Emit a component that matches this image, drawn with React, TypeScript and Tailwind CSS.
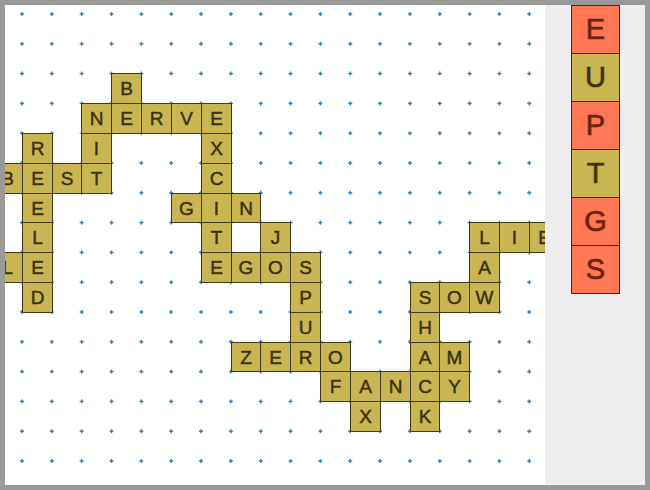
import React from "react";

const CELL_X = 29.84;
const CELL_Y = 29.8;
const X0 = 21.7;
const Y0 = 13.8;
const OFF = 5;

const px = (c: number) => Math.round(X0 + CELL_X * c) - OFF;
const py = (r: number) => Math.round(Y0 + CELL_Y * r) - OFF;

type T = [string, number, number];

const tiles: T[] = [
  ["B", 3, 2],
  ["N", 2, 3], ["E", 3, 3], ["R", 4, 3], ["V", 5, 3], ["E", 6, 3],
  ["R", 0, 4], ["I", 2, 4], ["X", 6, 4],
  ["B", -1, 5], ["E", 0, 5], ["S", 1, 5], ["T", 2, 5], ["C", 6, 5],
  ["E", 0, 6], ["G", 5, 6], ["I", 6, 6], ["N", 7, 6],
  ["L", 0, 7], ["T", 6, 7], ["J", 8, 7], ["L", 15, 7], ["I", 16, 7], ["E", 17, 7],
  ["L", -1, 8], ["E", 0, 8], ["E", 6, 8], ["G", 7, 8], ["O", 8, 8], ["S", 9, 8], ["A", 15, 8],
  ["D", 0, 9], ["P", 9, 9], ["S", 13, 9], ["O", 14, 9], ["W", 15, 9],
  ["U", 9, 10], ["H", 13, 10],
  ["Z", 7, 11], ["E", 8, 11], ["R", 9, 11], ["O", 10, 11], ["A", 13, 11], ["M", 14, 11],
  ["F", 10, 12], ["A", 11, 12], ["N", 12, 12], ["C", 13, 12], ["Y", 14, 12],
  ["X", 11, 13], ["K", 13, 13],
];

const rack: { l: string; salmon: boolean }[] = [
  { l: "E", salmon: true },
  { l: "U", salmon: false },
  { l: "P", salmon: true },
  { l: "T", salmon: false },
  { l: "G", salmon: true },
  { l: "S", salmon: true },
];

function Dots() {
  const items: React.ReactNode[] = [];
  for (let c = 0; c <= 17; c++) {
    for (let r = 0; r <= 15; r++) {
      const x = X0 + CELL_X * c - OFF + 0.3;
      const y = Y0 + CELL_Y * r - OFF + 0.2;
      items.push(
        <g key={`${c}-${r}`}>
          <line x1={x - 2} y1={y} x2={x + 2} y2={y} stroke="#2f82b4" strokeWidth={1.4} />
          <line x1={x} y1={y - 2} x2={x} y2={y + 2} stroke="#2f82b4" strokeWidth={1.4} />
        </g>
      );
    }
  }
  return (
    <svg className="absolute left-0 top-0" width={540} height={480}>
      {items}
    </svg>
  );
}

export default function App() {
  return (
    <div
      className="w-[650px] h-[490px] bg-[#999999] p-[5px] flex"
      style={{ fontFamily: '"Liberation Sans", Arial, sans-serif' }}
    >
      <div className="relative w-[540px] h-[480px] bg-white overflow-hidden">
        <Dots />
        {tiles.map(([l, c, r], i) => {
          const left = px(c);
          const top = py(r);
          const w = px(c + 1) - left + 1;
          const h = py(r + 1) - top + 1;
          return (
            <div
              key={i}
              className="absolute flex items-center justify-center bg-[#c9b552] border border-[#3e3917] text-[#3a3210] text-[19px] leading-none [-webkit-text-stroke:0.45px_#3a3210]"
              style={{ left, top, width: w, height: h }}
            >
              {l}
            </div>
          );
        })}
      </div>
      <div className="w-[100px] h-[480px] bg-[#eeeeee] flex flex-col">
        <div className="ml-[26px] flex flex-col">
          {rack.map((t, i) => (
            <div
              key={i}
              className={
                t.salmon
                  ? "w-[49px] h-[49px] -mt-[1px] first:mt-0 border border-[#5a200c] bg-[#ff7755] text-[#6b2512] flex items-center justify-center text-[29px] leading-none [-webkit-text-stroke:0.7px_#6b2512]"
                  : "w-[49px] h-[49px] -mt-[1px] first:mt-0 border border-[#5a200c] bg-[#c9b552] text-[#3d3512] flex items-center justify-center text-[29px] leading-none [-webkit-text-stroke:0.7px_#3d3512]"
              }
            >
              {t.l}
            </div>
          ))}
        </div>
      </div>
    </div>
  );
}
